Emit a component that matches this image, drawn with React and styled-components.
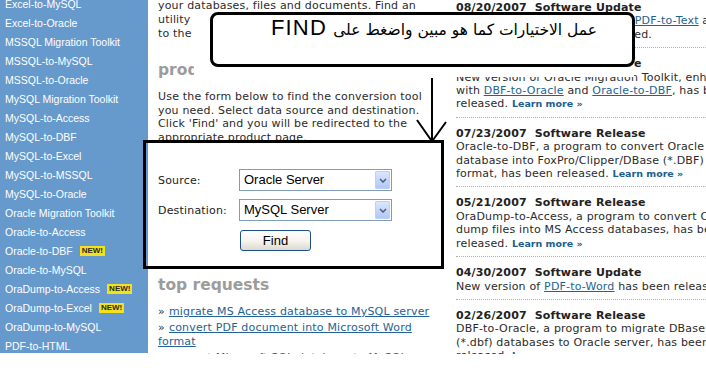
import React from "react";
import styled, { createGlobalStyle } from "styled-components";

const Global = createGlobalStyle`
  html, body { margin: 0; padding: 0; background: #fff; overflow: hidden; }
  #root { width: 706px; height: 384px; }
`;

const Viewport = styled.div`
  position: relative;
  width: 706px;
  height: 354px;
  overflow: hidden;
  background: #fff;
`;

const Page = styled.div`
  display: flex;
  align-items: flex-start;
  width: 1000px;
`;

const Sidebar = styled.nav`
  flex: 0 0 148px;
  height: 353px;
  background: #6699cc;
  overflow: hidden;
`;

const NavList = styled.ul`
  list-style: none;
  margin: -6px 0 0;
  padding: 0 0 0 5px;
`;

const NavItem = styled.li`
  display: flex;
  align-items: center;
  gap: 7px;
  height: 19px;
  font-family: "Liberation Sans", Arial, sans-serif;
  font-size: 10.5px;
  color: #fff;
  white-space: nowrap;
`;

const NewBadge = styled.span`
  display: inline-block;
  height: 10px;
  line-height: 10px;
  padding: 0 2px;
  background: #f4e11c;
  color: #2a2a2a;
  font: bold 8px "Liberation Sans", Arial, sans-serif;
`;

const Main = styled.main`
  flex: 0 0 282px;
  margin: -1px 0 0 10px;
  font-family: "DejaVu Sans", Verdana, sans-serif;
  font-size: 11px;
  letter-spacing: 0.18px;
  color: #2b2b2b;
`;

const Para = styled.p`
  margin: ${(p) => p.$mt || 0}px 0 0;
  line-height: ${(p) => p.$lh || 13.6}px;
  white-space: nowrap;
`;

const SectionTitle = styled.h2`
  margin: ${(p) => p.$mt || 0}px 0 0;
  font: bold 15.5px/20px "DejaVu Sans", Verdana, sans-serif;
  letter-spacing: 0;
  color: #9c9c9c;
`;

const Finder = styled.form`
  display: grid;
  grid-template-columns: 81px 153px;
  row-gap: 8px;
  align-items: center;
  margin: 0;
  padding-top: 25px;
`;

const FieldLabel = styled.label`
  color: #222;
`;

const SelectBox = styled.div`
  display: flex;
  align-items: stretch;
  height: 22px;
  box-sizing: border-box;
  border: 1px solid #7f9db9;
  background: #fff;
  padding: 1px;
`;

const SelectValue = styled.span`
  flex: 1;
  padding-left: 3px;
  font: 13px/18px "Liberation Sans", Arial, sans-serif;
  letter-spacing: 0;
  color: #000;
`;

const SelectArrow = styled.span`
  display: flex;
  align-items: center;
  justify-content: center;
  width: 15px;
  box-sizing: border-box;
  border: 1px solid #bcd0f8;
  border-radius: 1px;
  background: linear-gradient(#dbe6fe, #c3d4fb 60%, #b3c7f5);
`;

const ButtonCell = styled.div`
  grid-column: 2;
  margin-top: 1px;
  display: flex;
  padding-left: 1px;
`;

const FindButton = styled.button`
  width: 71px;
  height: 21px;
  padding: 0;
  border: 1px solid #1c4f8a;
  border-radius: 3px;
  background: linear-gradient(#ffffff, #f4f3ee 55%, #dcd8cc);
  font: 13px "Liberation Sans", Arial, sans-serif;
  color: #000;
`;

const RequestList = styled.ul`
  list-style: none;
  margin: 10px 0 0;
  padding: 0;
  line-height: 13.6px;
`;

const RequestItem = styled.li`
  margin-top: 2.4px;
  &:first-child { margin-top: 0; }
`;

const Bullet = styled.span`
  color: #333;
  margin-right: 4px;
`;

const Link = styled.a`
  color: #236394;
  text-decoration: underline;
`;

const News = styled.section`
  flex: 0 0 300px;
  margin: -8px 0 0 16px;
  font-family: "DejaVu Sans", Verdana, sans-serif;
  font-size: 11px;
  letter-spacing: 0.18px;
  line-height: 13.4px;
  color: #2b2b2b;
`;

const NewsItem = styled.article`
  padding: 9px 0 6px;
  border-bottom: 1px dotted #b0b0b0;
  white-space: nowrap;
`;

const NewsHead = styled.h3`
  margin: 0;
  font: bold 11px/13.4px "DejaVu Sans", Verdana, sans-serif;
  letter-spacing: 0.15px;
  color: #222;
  white-space: pre;
`;

const NewsLine = styled.div``;

const More = styled.a`
  font: bold 9.5px "DejaVu Sans", Verdana, sans-serif;
  letter-spacing: 0;
  color: #1d5d8f;
  text-decoration: none;
`;

const Mask = styled.div`
  position: absolute;
  left: 194px;
  top: 14px;
  width: 440px;
  height: 63px;
  background: #fff;
`;

const Callout = styled.div`
  position: absolute;
  left: 210px;
  top: 12px;
  width: 425px;
  height: 55px;
  box-sizing: border-box;
  border: 3px solid #000;
  border-radius: 8px;
  background: #fff;
  direction: rtl;
  text-align: right;
  padding: 4px 35px 0 0;
  font: 22px/18px "Liberation Sans", Arial, sans-serif;
  color: #000;
  white-space: nowrap;
`;

const CalloutArabic = styled.span`
  font: 15.5px/18px "DejaVu Sans", sans-serif;
`;

const CalloutLatin = styled.span`
  font: 22px/18px "Liberation Sans", Arial, sans-serif;
  letter-spacing: 1.2px;
`;

const FocusFrame = styled.div`
  position: absolute;
  left: 143px;
  top: 140px;
  width: 301px;
  height: 129px;
  box-sizing: border-box;
  border: 3px solid #000;
`;

const ArrowSvg = styled.svg`
  position: absolute;
  left: 410px;
  top: 74px;
`;

const navItems = [
  ["Excel-to-MySQL"],
  ["Excel-to-Oracle"],
  ["MSSQL Migration Toolkit"],
  ["MSSQL-to-MySQL"],
  ["MSSQL-to-Oracle"],
  ["MySQL Migration Toolkit"],
  ["MySQL-to-Access"],
  ["MySQL-to-DBF"],
  ["MySQL-to-Excel"],
  ["MySQL-to-MSSQL"],
  ["MySQL-to-Oracle"],
  ["Oracle Migration Toolkit"],
  ["Oracle-to-Access"],
  ["Oracle-to-DBF", true],
  ["Oracle-to-MySQL"],
  ["OraDump-to-Access", true],
  ["OraDump-to-Excel", true],
  ["OraDump-to-MySQL"],
  ["PDF-to-HTML"],
  ["PDF-to-Text"],
];

const LearnMore = () => <More href="#">Learn more »</More>;

const Chevron = () => (
  <svg width="8" height="5" viewBox="0 0 8 5">
    <path d="M1 1 L4 4 L7 1" fill="none" stroke="#4d6185" strokeWidth="1.6" />
  </svg>
);

export default function App() {
  return (
    <>
      <Global />
      <Viewport>
        <Page>
          <Sidebar>
            <NavList>
              {navItems.map(([name, isNew]) => (
                <NavItem key={name}>
                  {name}
                  {isNew && <NewBadge>NEW!</NewBadge>}
                </NavItem>
              ))}
            </NavList>
          </Sidebar>

          <Main>
            <Para $lh={14}>
              your databases, files and documents. Find an
              <br />
              utility that suits your needs in the list, or go
              <br />
              to the product finder below.
            </Para>
            <SectionTitle $mt={19}>product finder</SectionTitle>
            <Para $mt={10}>
              Use the form below to find the conversion tool
              <br />
              you need. Select data source and destination.
              <br />
              Click 'Find' and you will be redirected to the
              <br />
              appropriate product page.
            </Para>
            <Finder onSubmit={(e) => e.preventDefault()}>
              <FieldLabel>Source:</FieldLabel>
              <SelectBox>
                <SelectValue>Oracle Server</SelectValue>
                <SelectArrow><Chevron /></SelectArrow>
              </SelectBox>
              <FieldLabel>Destination:</FieldLabel>
              <SelectBox>
                <SelectValue>MySQL Server</SelectValue>
                <SelectArrow><Chevron /></SelectArrow>
              </SelectBox>
              <ButtonCell>
                <FindButton type="submit">Find</FindButton>
              </ButtonCell>
            </Finder>
            <SectionTitle $mt={24}>top requests</SectionTitle>
            <RequestList>
              <RequestItem>
                <Bullet>»</Bullet>
                <Link href="#">migrate MS Access database to MySQL server</Link>
              </RequestItem>
              <RequestItem>
                <Bullet>»</Bullet>
                <Link href="#">convert PDF document into Microsoft Word format</Link>
              </RequestItem>
              <RequestItem>
                <Bullet>»</Bullet>
                <Link href="#">convert Microsoft SQL database to MySQL</Link>
              </RequestItem>
            </RequestList>
          </Main>

          <News>
            <NewsItem>
              <NewsHead>08/20/2007  Software Update</NewsHead>
              <NewsLine>
                New release of PDF-to-RTF and <Link href="#">PDF-to-Text</Link> and
              </NewsLine>
              <NewsLine>PDF-to-HTML, have been released.</NewsLine>
            </NewsItem>
            <NewsItem>
              <NewsHead>08/06/2007  Software Update</NewsHead>
              <NewsLine>New version of Oracle Migration Toolkit, enhanced</NewsLine>
              <NewsLine>
                with <Link href="#">DBF-to-Oracle</Link> and <Link href="#">Oracle-to-DBF</Link>, has been
              </NewsLine>
              <NewsLine>
                released. <LearnMore />
              </NewsLine>
            </NewsItem>
            <NewsItem>
              <NewsHead>07/23/2007  Software Release</NewsHead>
              <NewsLine>Oracle-to-DBF, a program to convert Oracle</NewsLine>
              <NewsLine>database into FoxPro/Clipper/DBase (*.DBF)</NewsLine>
              <NewsLine>
                format, has been released. <LearnMore />
              </NewsLine>
            </NewsItem>
            <NewsItem>
              <NewsHead>05/21/2007  Software Release</NewsHead>
              <NewsLine>OraDump-to-Access, a program to convert Oracle</NewsLine>
              <NewsLine>dump files into MS Access databases, has been</NewsLine>
              <NewsLine>
                released. <LearnMore />
              </NewsLine>
            </NewsItem>
            <NewsItem>
              <NewsHead>04/30/2007  Software Update</NewsHead>
              <NewsLine>
                New version of <Link href="#">PDF-to-Word</Link> has been released.
              </NewsLine>
            </NewsItem>
            <NewsItem>
              <NewsHead>02/26/2007  Software Release</NewsHead>
              <NewsLine>DBF-to-Oracle, a program to migrate DBase</NewsLine>
              <NewsLine>(*.dbf) databases to Oracle server, has been</NewsLine>
              <NewsLine>
                released. <LearnMore />
              </NewsLine>
            </NewsItem>
          </News>
        </Page>

        <Mask />
        <Callout>
          <CalloutArabic>عمل الاختيارات كما هو مبين واضغط على</CalloutArabic>{" "}
          <CalloutLatin>FIND</CalloutLatin>
        </Callout>
        <ArrowSvg width="44" height="70" viewBox="0 0 44 70">
          <path
            d="M22 4 L22 66 M7 46 L21 66 M36 48 L23 66"
            fill="none"
            stroke="#000"
            strokeWidth="2"
          />
        </ArrowSvg>
        <FocusFrame />
      </Viewport>
    </>
  );
}
